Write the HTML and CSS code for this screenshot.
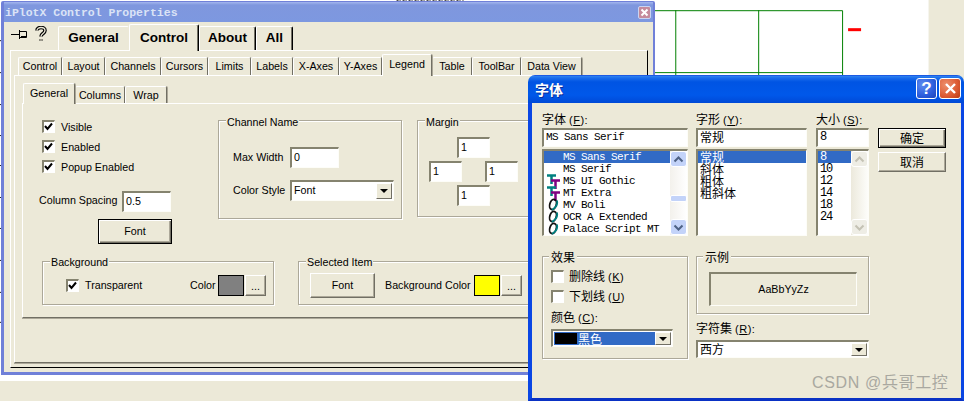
FILE: index.html
```html
<!DOCTYPE html>
<html lang="zh-CN">
<head>
<meta charset="utf-8">
<title>iPlotX Control Properties</title>
<link rel="stylesheet" href="styles.css">
</head>
<body>
<svg class="plot" width="929" height="381" viewBox="0 0 929 381">
  <g class="grid-lines">
    <path d="M650 10.5H843.5V75M650 72.5H843.5M676.5 10V75M759.5 10V75"/>
  </g>
  <rect class="red-dash" x="849" y="28" width="13" height="3"/>
  <path class="noise" d="M397 .5H464"/>
  <path class="ticks" d="M0 40.5H2M0 72.5H2M0 104.5H2M0 135.5H2M0 165.5H2M0 197.5H2M0 228.5H2M0 260.5H2M0 292.5H2M0 322.5H2"/>
</svg>

<section class="win">
  <header class="win-title">
    <span class="win-title-text">iPlotX Control Properties</span>
    <span class="win-close"><svg width="13" height="13" viewBox="0 0 13 13"><path d="M3.500 3.500l6 6M9.500 3.500l-6 6"/></svg></span>
  </header>
  <div class="win-body">
    <div class="top-row">
      <div class="top-icons">
        <svg class="ico-pin" width="17" height="10" viewBox="0 0 17 10"><path d="M0 4.500H8M8.500 0V9M8.500 1.500H15.500V7.500H8.500M10 6.500H15"/></svg>
        <svg class="ico-help" width="12" height="16" viewBox="0 0 12 16"><path class="h-o" d="M2 4.500C2 .5 10 .5 10 4.500C10 7.500 6 7.500 6 10.500M6 13.500V14.500"/><path class="h-i" d="M2 4.500C2 .5 10 .5 10 4.500C10 7.500 6 7.500 6 10.500M6 13.500V14.500"/></svg>
      </div>
      <div class="tabs tabs-top">
        <div class="tab">General</div>
        <div class="tab active">Control</div>
        <div class="tab">About</div>
        <div class="tab">All</div>
      </div>
    </div>
    <div class="panel-outer">
      <div class="tabs tabs-mid">
        <div class="tab">Control</div>
        <div class="tab">Layout</div>
        <div class="tab">Channels</div>
        <div class="tab">Cursors</div>
        <div class="tab">Limits</div>
        <div class="tab">Labels</div>
        <div class="tab">X-Axes</div>
        <div class="tab">Y-Axes</div>
        <div class="tab active">Legend</div>
        <div class="tab">Table</div>
        <div class="tab">ToolBar</div>
        <div class="tab">Data View</div>
      </div>
      <div class="panel-mid">
        <div class="tabs tabs-low">
          <div class="tab active">General</div>
          <div class="tab">Columns</div>
          <div class="tab">Wrap</div>
        </div>
        <div class="panel-inner">
          <div class="upper">
            <div class="left-col">
              <div class="check-row"><span class="chk"><svg width="9" height="9" viewBox="0 0 9 9"><path d="M1 4l2.500 3L8 1.500"/></svg></span>Visible</div>
              <div class="check-row"><span class="chk"><svg width="9" height="9" viewBox="0 0 9 9"><path d="M1 4l2.500 3L8 1.500"/></svg></span>Enabled</div>
              <div class="check-row"><span class="chk"><svg width="9" height="9" viewBox="0 0 9 9"><path d="M1 4l2.500 3L8 1.500"/></svg></span>Popup Enabled</div>
              <div class="spacing-row"><span class="spacing-label">Column Spacing</span><span class="field w48">0.5</span></div>
              <div class="btn def font-btn">Font</div>
            </div>
            <div class="group channel">
              <span class="legend">Channel Name</span>
              <div class="form-row"><span class="form-label">Max Width</span><span class="field w48">0</span></div>
              <div class="form-row"><span class="form-label">Color Style</span><span class="field combo w104">Font<span class="drop"><i></i></span></span></div>
            </div>
            <div class="group margin">
              <span class="legend">Margin</span>
              <div class="margin-grid">
                <span class="field m-top">1</span>
                <span class="field m-left">1</span>
                <span class="field m-right">1</span>
                <span class="field m-bottom">1</span>
              </div>
            </div>
          </div>
          <div class="lower">
            <div class="group bg-group">
              <span class="legend">Background</span>
              <span class="chk"><svg width="9" height="9" viewBox="0 0 9 9"><path d="M1 4l2.500 3L8 1.500"/></svg></span>
              <span class="transparent">Transparent</span>
              <span class="color-label">Color</span>
              <span class="swatch gray"></span>
              <span class="btn dots">...</span>
            </div>
            <div class="group sel-group">
              <span class="legend">Selected Item</span>
              <span class="btn sel-font">Font</span>
              <span class="bgc-label">Background Color</span>
              <span class="swatch yellow"></span>
              <span class="btn dots">...</span>
            </div>
          </div>
        </div>
      </div>
    </div>
  </div>
</section>

<section class="dlg">
  <header class="dlg-title">
    <span class="dlg-title-text">字体</span>
    <span class="cap help">?</span>
    <span class="cap close"><svg width="15" height="15" viewBox="0 0 15 15"><path d="M3 3l9 9M12 3l-9 9"/></svg></span>
  </header>
  <div class="dlg-body">
    <div class="dlg-top">
      <div class="col col-font">
        <div class="lab">字体<span class="key">(<u>F</u>):</span></div>
        <div class="field dlg-field mono">MS Sans Serif</div>
        <div class="list">
          <div class="items">
            <div class="item font sel">MS Sans Serif</div>
            <div class="item font">MS Serif</div>
            <div class="item font"><svg class="ti" width="13" height="15" viewBox="0 0 13 15"><path class="t1" d="M0 1.500H9M4.500 1V10"/><path class="t2" d="M4 6.500H13M8.500 6V15"/></svg>MS UI Gothic</div>
            <div class="item font"><svg class="ti" width="13" height="15" viewBox="0 0 13 15"><path class="t1" d="M0 1.500H9M4.500 1V10"/><path class="t2" d="M4 6.500H13M8.500 6V15"/></svg>MT Extra</div>
            <div class="item font"><svg class="ti" width="13" height="13" viewBox="0 0 13 13"><ellipse class="o1" cx="6" cy="6.500" rx="3.200" ry="5.200" transform="rotate(18 6 6.500)"/><path class="o2" d="M10 2.500C11 6 9 9.500 5 12"/></svg>MV Boli</div>
            <div class="item font"><svg class="ti" width="13" height="13" viewBox="0 0 13 13"><ellipse class="o1" cx="6" cy="6.500" rx="3.200" ry="5.200" transform="rotate(18 6 6.500)"/><path class="o2" d="M10 2.500C11 6 9 9.500 5 12"/></svg>OCR A Extended</div>
            <div class="item font"><svg class="ti" width="13" height="13" viewBox="0 0 13 13"><ellipse class="o1" cx="6" cy="6.500" rx="3.200" ry="5.200" transform="rotate(18 6 6.500)"/><path class="o2" d="M10 2.500C11 6 9 9.500 5 12"/></svg>Palace Script MT</div>
          </div>
          <div class="sb">
            <span class="sb-btn"><svg width="11" height="7" viewBox="0 0 11 7"><path d="M1.500 5.500L5.500 1.500L9.500 5.500"/></svg></span>
            <span class="sb-track"><span class="sb-thumb"></span></span>
            <span class="sb-btn"><svg width="11" height="7" viewBox="0 0 11 7"><path d="M1.500 1.500L5.500 5.500L9.500 1.500"/></svg></span>
          </div>
        </div>
      </div>
      <div class="col col-style">
        <div class="lab">字形<span class="key">(<u>Y</u>):</span></div>
        <div class="field dlg-field">常规</div>
        <div class="list">
          <div class="items">
            <div class="item sel">常规</div>
            <div class="item">斜体</div>
            <div class="item">粗体</div>
            <div class="item">粗斜体</div>
          </div>
        </div>
      </div>
      <div class="col col-size">
        <div class="lab">大小<span class="key">(<u>S</u>):</span></div>
        <div class="field dlg-field mono-num">8</div>
        <div class="list">
          <div class="items">
            <div class="item num sel">8</div>
            <div class="item num">10</div>
            <div class="item num">12</div>
            <div class="item num">14</div>
            <div class="item num">18</div>
            <div class="item num">24</div>
          </div>
          <div class="sb disabled">
            <span class="sb-btn"><svg width="11" height="7" viewBox="0 0 11 7"><path d="M1.500 5.500L5.500 1.500L9.500 5.500"/></svg></span>
            <span class="sb-track"></span>
            <span class="sb-btn"><svg width="11" height="7" viewBox="0 0 11 7"><path d="M1.500 1.500L5.500 5.500L9.500 1.500"/></svg></span>
          </div>
        </div>
      </div>
      <div class="col col-btns">
        <div class="btn def dlg-btn">确定</div>
        <div class="btn dlg-btn">取消</div>
      </div>
    </div>
    <div class="dlg-bottom">
      <div class="group effects">
        <span class="legend cjk-legend">效果</span>
        <div class="check-row dlg-check"><span class="chk"></span><span>删除线<span class="key">(<u>K</u>)</span></span></div>
        <div class="check-row dlg-check"><span class="chk"></span><span>下划线<span class="key">(<u>U</u>)</span></span></div>
        <div class="lab color-lab">颜色<span class="key">(<u>C</u>):</span></div>
        <div class="field combo color-combo"><span class="color-sel"><i class="black"></i>黑色</span><span class="drop"><i></i></span></div>
      </div>
      <div class="right-stack">
        <div class="group sample">
          <span class="legend cjk-legend">示例</span>
          <div class="preview">AaBbYyZz</div>
        </div>
        <div class="lab charset-lab">字符集<span class="key">(<u>R</u>):</span></div>
        <div class="field combo charset">西方<span class="drop"><i></i></span></div>
      </div>
    </div>
  </div>
</section>

<div class="watermark">CSDN @兵哥工控</div>
</body>
</html>
```

FILE: styles.css
```css
* { box-sizing: border-box; }
html, body { margin: 0; padding: 0; }
body {
  width: 964px;
  height: 401px;
  overflow: hidden;
  background: #ece9d8;
  position: relative;
  font: 10.700px/13px "Liberation Sans", "Noto Sans CJK SC", sans-serif;
  color: #000;
}

/* background plot canvas */
.plot { position: absolute; left: 0; top: 0; background: #fff; border-right: 1px solid #f6f5ee; }
.grid-lines path { fill: none; stroke: #008000; stroke-width: 1; }
.red-dash { fill: #ff0000; }
.noise { stroke: #222; stroke-dasharray: 2 1 1 2; stroke-width: 1; }
.ticks { stroke: #222; stroke-width: 1; }

/* properties window */
.win {
  position: absolute;
  left: 1px;
  top: 1px;
  width: 654px;
  height: 374px;
  border: solid #7080d8;
  border-width: 1px 2px 3px 3px;
  border-radius: 2px 2px 0 0;
  display: flex;
  flex-direction: column;
  background: #ece9d8;
}
.win-title {
  height: 20px;
  flex: none;
  display: flex;
  align-items: center;
  justify-content: space-between;
  padding: 1px 2px 0 1px;
  background: linear-gradient(180deg, #a3b6ee 0, #7f97de 3px, #7d98e0 100%);
}
.win-title-text {
  font: bold 11.500px/14px "Liberation Mono", monospace;
  color: #dbe3f6;
}
.win-close {
  width: 13px;
  height: 13px;
  background: #c58b9c;
  border: 1px solid #c9d4f2;
  border-radius: 2px;
  display: flex;
}
.win-close svg { margin: -1px; flex: none; }
.win-close path { stroke: #fff; stroke-width: 2; fill: none; }
.win-body { flex: 1; padding: 2px 5px 0 6px; min-height: 0; }

.top-row { display: flex; height: 26px; }
.top-icons { width: 48px; flex: none; display: flex; align-items: flex-start; gap: 7px; padding: 3px 0 0 1px; }
.ico-pin { margin-top: 3px; }
.ico-pin path { stroke: #000; fill: none; stroke-width: 1; }
.ico-help { flex: none; margin-top: -1px; }
.ico-help path { fill: none; }
.h-o { stroke: #000; stroke-width: 3.600; }
.h-i { stroke: #ece9d8; stroke-width: 1.300; }

/* tabs */
.tabs { display: grid; align-items: end; position: relative; z-index: 1; }
.tab {
  border: solid #fff;
  border-width: 1px 0 0 1px;
  border-right: 1px solid #716f64;
  box-shadow: 1px 0 0 #aca899;
  border-radius: 2px 2px 0 0;
  background: #ece9d8;
  text-align: center;
  white-space: nowrap;
  height: 100%;
}
.tab.active { position: relative; z-index: 2; }
.tabs-top { grid-template-columns: 71px 70px 57px 37px; height: 26px; }
.tabs-top .tab {
  height: 24px;
  font: bold 13.500px/22px "Liberation Sans", sans-serif;
  border-right-color: #000;
  box-shadow: inset -1px 0 0 #716f64;
}
.tabs-top .tab:first-child { border-right-color: #ece9d8; box-shadow: none; }
.tabs-top .tab.active { height: 27px; margin-bottom: -1px; line-height: 26px; }

.panel-outer {
  height: 318px;
  border: 1px solid;
  border-color: #fff #000 #000 #fff;
  padding: 3px 6px 4px 3px;
  display: flex;
  flex-direction: column;
}
.tabs-mid {
  grid-template-columns: 44px 43px 56px 47px 43px 42px 46px 43px 50px 40px 49px 61px;
  height: 21px;
  margin-left: 4px;
}
.tabs-mid .tab { height: 18px; line-height: 16px; }
.tabs-mid .tab.active { height: 22px; margin-bottom: -1px; line-height: 18px; }

.panel-mid {
  flex: 1;
  border: solid #fff;
  border-width: 1px 0 0 1px;
  border-bottom: 1px solid #716f64;
  box-shadow: 0 1px 0 #aca899;
  padding-top: 7px;
  min-height: 0;
}
.tabs-low {
  grid-template-columns: 52px 50px 42px;
  height: 20px;
  margin-left: 8px;
}
.tabs-low .tab { height: 17px; line-height: 16px; }
.tabs-low .tab.active { height: 21px; margin-bottom: -1px; line-height: 19px; }

.panel-inner {
  margin: 0 5px 0 7px;
  height: 215px;
  border: solid #fff;
  border-width: 1px 0 0 1px;
  border-bottom: 1px solid #716f64;
  box-shadow: 0 1px 0 #aca899;
  padding: 16px 0 0 19px;
}

/* form parts */
.upper { display: flex; height: 124px; }
.left-col { width: 176px; flex: none; }
.check-row { display: flex; align-items: flex-start; gap: 6px; height: 13px; line-height: 15px; margin-bottom: 7px; white-space: nowrap; }
.chk {
  width: 13px;
  height: 13px;
  flex: none;
  background: #fff;
  border: solid;
  border-width: 2px 1px 1px 2px;
  border-color: #85836f #fff #fff #85836f;
  display: flex;
  align-items: center;
  justify-content: center;
}
.chk svg { flex: none; margin: -1px 0 0 -1px; }
.chk path { fill: none; stroke: #000; stroke-width: 2; }

.spacing-row { display: flex; align-items: center; margin: 18px 0 7px -3px; }
.spacing-label { width: 83px; flex: none; white-space: nowrap; margin-top: -3px; }
.field {
  display: block;
  height: 21px;
  background: #fff;
  border: solid;
  border-width: 2px 1px 1px 2px;
  border-color: #85836f #fdfdf8 #fdfdf8 #85836f;
  line-height: 17px;
  padding-left: 2px;
  white-space: nowrap;
  flex: none;
  overflow: hidden;
}
.w48 { width: 49px; }
.w104 { width: 104px; }
.btn {
  background: #ece9d8;
  border: 1px solid;
  border-color: #fff #716f64 #716f64 #fff;
  box-shadow: inset -1px -1px 0 #aca899;
  text-align: center;
  flex: none;
}
.btn.def {
  border-color: #000;
  box-shadow: inset 1px 1px 0 #fff, inset -1px -1px 0 #716f64, inset -2px -2px 0 #aca899;
}
.font-btn { width: 74px; height: 25px; line-height: 22px; margin-left: 56px; }

.group {
  position: relative;
  border: 1px solid #aca899;
  box-shadow: 1px 1px 0 #fff, inset 1px 1px 0 #fff;
  flex: none;
}
.legend {
  position: absolute;
  left: 7px;
  top: -5px;
  background: #ece9d8;
  padding: 0 1px;
  white-space: nowrap;
}
.lower .legend { top: -6px; }
.channel { width: 184px; height: 99px; padding: 26px 0 0 14px; }
.form-row { display: flex; align-items: center; margin-bottom: 12px; }
.form-label { width: 57px; flex: none; white-space: nowrap; }
.combo { position: relative; }
.drop {
  position: absolute;
  right: 1px;
  top: 1px;
  bottom: 1px;
  width: 16px;
  background: #ece9d8;
  border: 1px solid;
  border-color: #fff #716f64 #716f64 #fff;
  display: flex;
  align-items: center;
  justify-content: center;
}
.drop i { width: 0; height: 0; border: 4px solid transparent; border-top-color: #000; border-bottom-width: 0; }

.margin { width: 130px; height: 97px; margin-left: 15px; padding: 16px 0 0 11px; }
.margin-grid { display: grid; grid-template-columns: 28px 28px 33px; grid-template-rows: 24px 24px 21px; }
.margin-grid .field { width: 33px; }
.m-top { grid-column: 2; grid-row: 1; }
.m-left { grid-column: 1; grid-row: 2; }
.m-right { grid-column: 3; grid-row: 2; }
.m-bottom { grid-column: 2; grid-row: 3; }

.lower { display: flex; gap: 24px; margin-top: 17px; }
.bg-group { width: 232px; height: 44px; display: flex; align-items: center; padding: 4px 0 0 23px; }
.transparent { width: 105px; margin-left: 6px; white-space: nowrap; flex: none; }
.color-label { width: 28px; flex: none; }
.swatch { width: 26px; height: 21px; border: 1px solid #000; flex: none; margin-right: 1px; }
.gray { background: #808080; }
.yellow { background: #ffff00; }
.dots { width: 21px; height: 21px; line-height: 20px; letter-spacing: 0; }
.sel-group { width: 240px; height: 44px; display: flex; align-items: center; padding: 4px 0 0 11px; }
.sel-font { width: 65px; height: 25px; line-height: 22px; margin-top: 1px; }
.bgc-label { width: 89px; margin-left: 10px; white-space: nowrap; flex: none; }

/* font dialog */
.dlg {
  position: absolute;
  left: 528px;
  top: 75px;
  width: 436px;
  height: 326px;
  display: flex;
  flex-direction: column;
  border-radius: 7px 7px 0 0;
  overflow: hidden;
  font: 12px/12px "Noto Sans CJK SC", sans-serif;
}
.dlg-title {
  height: 28px;
  flex: none;
  display: flex;
  align-items: center;
  gap: 2px;
  padding: 0 3px 2px 7px;
  background: linear-gradient(180deg, #0831d9 0, #2f83ef 1px, #1a6cec 3px, #0054e3 7px, #0058ea 20px, #0049d6 100%);
}
.dlg-title-text {
  font: bold 14px/18px "Noto Sans CJK SC", sans-serif;
  color: #fff;
  text-shadow: 1px 1px 0 #0a2f9a;
  margin-right: auto;
  padding-top: 2px;
}
.cap {
  width: 21px;
  height: 21px;
  border: 1px solid #fff;
  border-radius: 3px;
  display: flex;
  align-items: center;
  justify-content: center;
  color: #fff;
  flex: none;
}
.help {
  background: radial-gradient(circle at 30% 30%, #5d8cf0 0, #2b5cdc 60%, #1c43b8 100%);
  font: bold 17px/19px "Liberation Sans", sans-serif;
}
.close { width: 22px; background: radial-gradient(circle at 30% 30%, #ed8f6c 0, #dc5a32 60%, #b83a14 100%); }
.close path { stroke: #fff; stroke-width: 2.400; fill: none; }

.dlg-body {
  flex: 1;
  background: #ece9d8;
  border: solid #0a46e4;
  border-width: 0 3px 3px 4px;
  border-bottom-color: #0a32c4;
  padding: 10px 0 0 10px;
  min-height: 0;
}
.lab { height: 15px; line-height: 11px; white-space: nowrap; }
.key { font: 11px/11px "Liberation Sans", sans-serif; letter-spacing: .5px; margin-left: 3px; }
.dlg-top { display: flex; }
.col { flex: none; margin-right: 8px; }
.col-font { width: 146px; }
.col-style { width: 111px; margin-right: 9px; }
.col-size { width: 53px; margin-right: 9px; }
.col-btns { width: 68px; padding-top: 15px; margin-right: 0; }
.dlg-field { height: 19px; line-height: 14px; }
.mono { font: 11px/15px "Liberation Mono", monospace; letter-spacing: -.6px; }
.mono-num { font: 12px/15px "Liberation Mono", monospace; letter-spacing: -1.200px; }
.list {
  height: 87px;
  margin-top: 2px;
  background: #fff;
  border: solid;
  border-width: 2px 1px 1px 2px;
  border-color: #85836f #fdfdf8 #fdfdf8 #85836f;
  display: flex;
  overflow: hidden;
}
.items { flex: 1; min-width: 0; }
.item { position: relative; height: 12px; line-height: 11px; padding-left: 2px; white-space: nowrap; }
.item.sel { background: #316ac5; color: #fff; }
.item.num { font: 12px/12px "Liberation Mono", monospace; letter-spacing: -1.200px; }
.item.font { font: 11px/12px "Liberation Mono", monospace; letter-spacing: -.6px; padding-left: 19px; color: #000; }
.item.font.sel { color: #fff; }
.ti { position: absolute; left: 3px; top: -1px; overflow: visible; }
.t1 { stroke: #008080; stroke-width: 2.500; fill: none; }
.t2 { stroke: #800080; stroke-width: 2.500; fill: none; }
.o1 { fill: none; stroke: #111; stroke-width: 1.800; }
.o2 { fill: none; stroke: #008080; stroke-width: 1.800; }

.sb { width: 17px; flex: none; display: flex; flex-direction: column; background: linear-gradient(90deg, #f3f1ec, #fff); }
.sb-btn {
  height: 16px;
  flex: none;
  display: flex;
  align-items: center;
  justify-content: center;
  border: 1px solid #fff;
  border-radius: 3px;
  background: #c3d3f9;
}
.sb-btn path { fill: none; stroke: #4d6185; stroke-width: 2; }
.sb-track { flex: 1; padding-top: 28px; min-height: 0; }
.sb-thumb { display: block; height: 7px; background: #c3d3f9; border: 1px solid #fff; border-radius: 2px; }
.sb.disabled { background: linear-gradient(90deg, #ece9dc, #fdfdfa); }
.sb.disabled .sb-btn { background: #eeede5; }
.sb.disabled .sb-btn path { stroke: #c4c2b4; }
.dlg-btn { width: 68px; height: 20px; line-height: 18px; margin-bottom: 4px; }

.dlg-bottom { display: flex; gap: 8px; margin-top: 20px; }
.cjk-legend { left: 6px; top: -7px; padding: 0 2px; line-height: 13px; }
.effects { width: 146px; height: 103px; padding: 13px 0 0 8px; }
.dlg-check { margin-bottom: 7px; gap: 5px; line-height: 12px; }
.color-lab { margin-top: 7px; height: 19px; line-height: 13px; }
.color-combo { width: 122px; height: 18px; padding: 1px 0 0 1px; }
.color-sel {
  display: flex;
  align-items: center;
  gap: 1px;
  width: 101px;
  height: 13px;
  background: #316ac5;
  color: #fff;
  border: 1px solid #316ac5;
  line-height: 10px;
}
.color-sel i { width: 22px; height: 11px; background: #000; flex: none; }
.right-stack { width: 173px; flex: none; }
.sample { width: 173px; height: 58px; padding: 15px 0 0 12px; }
.preview {
  width: 148px;
  height: 34px;
  border: solid;
  border-width: 2px 1px 1px 2px;
  border-color: #85836f #fdfdf8 #fdfdf8 #85836f;
  text-align: center;
  font: 10.700px/31px "Liberation Sans", sans-serif;
}
.charset-lab { margin-top: 8px; height: 18px; }
.charset { height: 18px; line-height: 14px; }

.watermark {
  position: absolute;
  left: 812px;
  top: 373px;
  font: 16px/20px "Liberation Sans", "Noto Sans CJK SC", sans-serif;
  letter-spacing: .65px;
  color: #a9a8a0;
  white-space: nowrap;
}
```
